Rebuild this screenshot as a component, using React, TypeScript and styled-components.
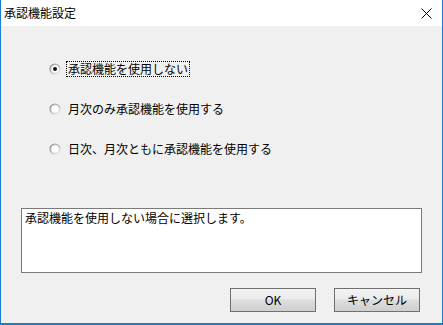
import React, { useState } from "react";
import styled, { createGlobalStyle } from "styled-components";

const GlobalStyle = createGlobalStyle`
  html, body { margin: 0; padding: 0; background: #f0f0f0; }
  body { font-family: "Noto Sans CJK JP", "Noto Sans", sans-serif; }
  * { box-sizing: border-box; }
`;

const Window = styled.div`
  width: 443px;
  height: 325px;
  display: flex;
  flex-direction: column;
  border: 1px solid #1a7dd1;
  border-top: none;
  border-bottom-width: 2px;
  background: #f0f0f0;
  font-family: "Noto Sans CJK JP", "Noto Sans", sans-serif;
  font-size: 12px;
  color: #000;
`;

const TitleBar = styled.div`
  height: 26px;
  flex: none;
  background: #ffffff;
  display: flex;
  align-items: center;
  justify-content: space-between;
  padding: 0 10px 0 3px;
`;

const Title = styled.span`
  font-size: 12px;
  line-height: 16px;
  color: #000;
`;

const CloseIcon = () => (
  <svg width="11" height="11" viewBox="0 0 11 11">
    <path d="M0.5 0.5 L10.5 10.5 M10.5 0.5 L0.5 10.5" stroke="#000" strokeWidth="1" fill="none" />
  </svg>
);

const Body = styled.div`
  flex: 1;
  display: flex;
  flex-direction: column;
  padding: 35px 20px 0;
`;

const RadioGroup = styled.div`
  display: flex;
  flex-direction: column;
  gap: 24px;
  padding-left: 28px;
`;

const RadioRow = styled.label`
  display: flex;
  align-items: center;
  height: 16px;
  cursor: default;
`;

const RadioBox = styled.span`
  width: 12px;
  height: 12px;
  flex: none;
  display: block;
  margin-right: 5px;
  svg { display: block; }
`;

const RadioText = styled.span<{ $focused?: boolean }>`
  border: 1px dotted ${(p) => (p.$focused ? "#000" : "transparent")};
  padding: 0 1px;
  height: 16px;
  line-height: 14px;
  font-size: 12px;
  white-space: nowrap;
`;

const RadioMark = ({ checked }: { checked: boolean }) => (
  <svg width="12" height="12" viewBox="0 0 12 12">
    <defs>
      <linearGradient id="rg-outer" x1="0" y1="0" x2="1" y2="1">
        <stop offset="0" stopColor="#7e7e7e" />
        <stop offset="0.5" stopColor="#b4b4b4" />
        <stop offset="1" stopColor="#f4f4f4" />
      </linearGradient>
      <linearGradient id="rg-inner" x1="0" y1="0" x2="1" y2="1">
        <stop offset="0" stopColor="#c4c4c4" />
        <stop offset="1" stopColor="#f8f8f8" />
      </linearGradient>
    </defs>
    <circle cx="6" cy="6" r="5.6" fill="url(#rg-outer)" />
    <circle cx="6" cy="6" r="4.5" fill="url(#rg-inner)" />
    <circle cx="6" cy="6" r="3.5" fill="#ffffff" />
    {checked && <circle cx="6" cy="6" r="2" fill="#111111" />}
  </svg>
);

const Description = styled.div`
  margin-top: 51px;
  height: 65px;
  border: 1px solid #7a7a7a;
  background: #ffffff;
  padding: 2px 3px;
  font-size: 12px;
  line-height: 14px;
`;

const ButtonRow = styled.div`
  margin-top: 15px;
  display: flex;
  justify-content: flex-end;
  gap: 18px;
  padding-right: 2px;
`;

const Button = styled.button`
  width: 86px;
  height: 24px;
  border: 1px solid #707070;
  border-radius: 0;
  background: linear-gradient(#f3f3f3 0%, #ebebeb 45%, #dddddd 50%, #cfcfcf 100%);
  font-family: "Noto Sans CJK JP", "Noto Sans", sans-serif;
  font-size: 12px;
  color: #000;
  padding: 0;
  line-height: 20px;
  cursor: default;
`;

const options = [
  "承認機能を使用しない",
  "月次のみ承認機能を使用する",
  "日次、月次ともに承認機能を使用する",
];

export default function App() {
  const [selected, setSelected] = useState(0);
  return (
    <>
      <GlobalStyle />
      <Window>
        <TitleBar>
          <Title>承認機能設定</Title>
          <CloseIcon />
        </TitleBar>
        <Body>
          <RadioGroup>
            {options.map((o, i) => (
              <RadioRow key={o} onClick={() => setSelected(i)}>
                <RadioBox>
                  <RadioMark checked={selected === i} />
                </RadioBox>
                <RadioText $focused={i === 0}>{o}</RadioText>
              </RadioRow>
            ))}
          </RadioGroup>
          <Description>承認機能を使用しない場合に選択します。</Description>
          <ButtonRow>
            <Button>OK</Button>
            <Button>キャンセル</Button>
          </ButtonRow>
        </Body>
      </Window>
    </>
  );
}
